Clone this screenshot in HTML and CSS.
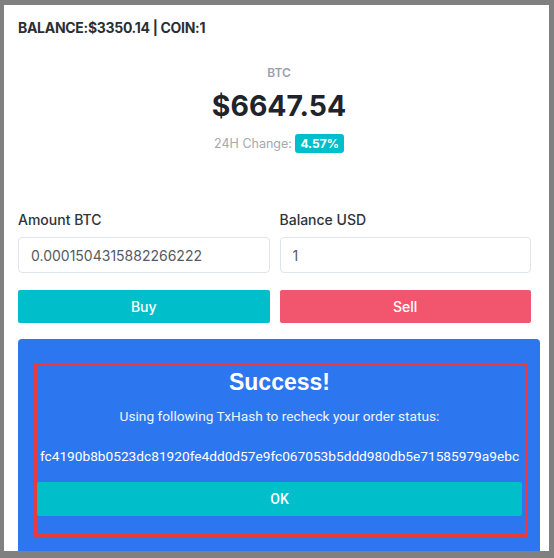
FILE: index.html
```html
<!DOCTYPE html>
<html>
<head>
<meta charset="utf-8">
<link rel="stylesheet" href="styles.css">
</head>
<body>
<div class="app">
  <div class="topbar">BALANCE:$3350.14 | COIN:1</div>
  <div class="ticker">
    <div class="sym">BTC</div>
    <div class="price">$6647.54</div>
    <div class="change">24H Change: <span class="badge">4.57%</span></div>
  </div>
  <div class="trade">
    <div class="col">
      <label class="lbl">Amount BTC</label>
      <input class="inp" type="text" value="0.0001504315882266222">
      <button class="btn buy">Buy</button>
    </div>
    <div class="col">
      <label class="lbl">Balance USD</label>
      <input class="inp" type="text" value="1">
      <button class="btn sell">Sell</button>
    </div>
  </div>
  <div class="panel">
    <div class="result">
      <h2 class="title">Success!</h2>
      <p class="msg">Using following TxHash to recheck your order status:</p>
      <p class="hash">fc4190b8b0523dc81920fe4dd0d57e9fc067053b5ddd980db5e71585979a9ebc</p>
      <button class="ok">OK</button>
    </div>
  </div>
</div>
</body>
</html>
```
FILE: styles.css
```css
* { box-sizing: border-box; }
html, body { margin: 0; }
body {
  background: #808080;
  padding: 5px 5px 7px 4px;
  font-family: Inter, "Liberation Sans", sans-serif;
}
.app {
  background: #fff;
  height: 546px;
  overflow: hidden;
  padding: 0 18px 0 14px;
}
.topbar {
  padding-top: 13px;
  font-size: 14px;
  line-height: 20px;
  font-weight: 700;
  letter-spacing: -0.3px;
  color: #2a2f36;
}
.ticker {
  text-align: center;
  margin-top: 28px;
  margin-right: -9px;
}
.sym {
  font-size: 12px;
  line-height: 14px;
  font-weight: 600;
  color: #9aa1aa;
}
.price {
  font-size: 28.4px;
  line-height: 34px;
  font-weight: 700;
  color: #1f242b;
  margin-top: 9px;
}
.change {
  margin-top: 11px;
  font-size: 12.5px;
  line-height: 20px;
  color: #a3a9b0;
}
.badge {
  display: inline-block;
  vertical-align: middle;
  background: #00bfcb;
  color: #fff;
  font-weight: 700;
  font-size: 12px;
  line-height: 19px;
  padding: 0 5px;
  border-radius: 3px;
  margin-top: -2px;
}
.trade {
  display: flex;
  gap: 10px;
  margin-top: 56px;
}
.col {
  flex: 1;
  display: flex;
  flex-direction: column;
}
.lbl {
  font-size: 14px;
  line-height: 20px;
  font-weight: 500;
  color: #2f343b;
}
.inp {
  margin-top: 7px;
  height: 36px;
  border: 1px solid #dfe5ec;
  border-radius: 4px;
  padding: 0 12px;
  font-family: inherit;
  font-size: 14px;
  color: #555b62;
  outline: none;
}
.btn {
  margin-top: 17px;
  height: 33px;
  border: 0;
  border-radius: 2px;
  color: #fff;
  font-family: inherit;
  font-size: 14px;
  font-weight: 500;
}
.buy { background: #00bfcb; }
.sell { background: #f2566e; }
.panel {
  margin-top: 16px;
  margin-right: -9px;
  background: #2c77f0;
  border-radius: 4px;
  padding: 24px 12px 20px 16px;
  height: 240px;
}
.result {
  border: 3px solid #ea3a3e;
  padding: 0 3px 18px 0;
  text-align: center;
  color: #fff;
  font-family: Roboto, "Liberation Sans", sans-serif;
}
.title {
  margin: 2px 0 0;
  font-family: "Liberation Sans", Arial, sans-serif;
  font-size: 23px;
  line-height: 28px;
  font-weight: 700;
}
.msg {
  margin: 10px 0 0;
  font-size: 13.7px;
  line-height: 20px;
  color: #eef3ff;
}
.hash {
  margin: 20px 0 0;
  font-size: 13.7px;
  line-height: 20px;
}
.ok {
  display: block;
  width: 100%;
  margin-top: 16px;
  height: 34px;
  border: 0;
  border-radius: 2px;
  background: #00bfcb;
  color: #fff;
  font-family: inherit;
  font-size: 14px;
  font-weight: 500;
}
```
